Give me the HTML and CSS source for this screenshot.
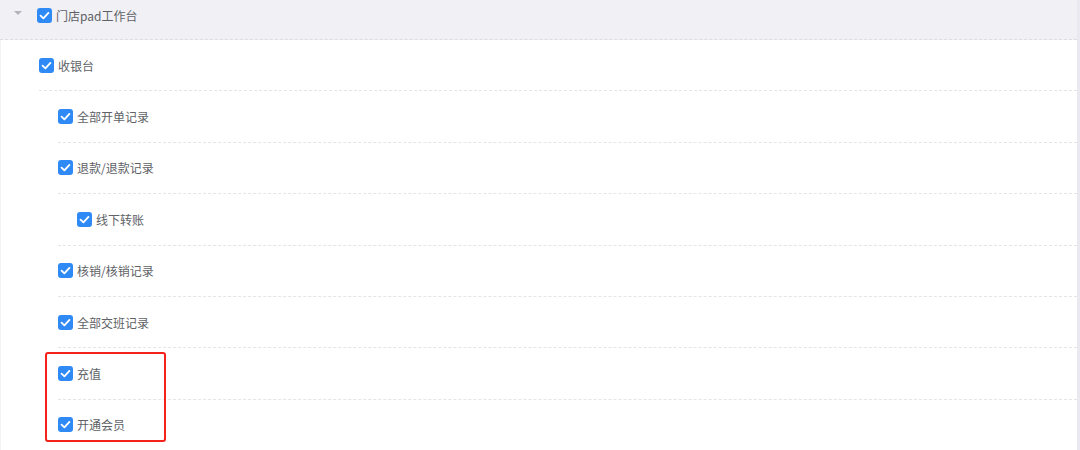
FILE: index.html
```html
<!DOCTYPE html>
<html lang="zh">
<head>
<meta charset="utf-8">
<link rel="stylesheet" href="styles.css">
</head>
<body>
<div class="page">
  <div class="tree">
    <div class="head">
      <span class="caret"></span>
      <span class="cb"><svg viewBox="0 0 16 16"><path d="M3.8 8.2 L6.8 11 L12.2 5.2" /></svg></span>
      <span class="label head-label">门店pad工作台</span>
    </div>
    <div class="row lvl1"><span class="cb"><svg viewBox="0 0 16 16"><path d="M3.8 8.2 L6.8 11 L12.2 5.2" /></svg></span><span class="label">收银台</span></div>
    <div class="row lvl2"><span class="cb"><svg viewBox="0 0 16 16"><path d="M3.8 8.2 L6.8 11 L12.2 5.2" /></svg></span><span class="label">全部开单记录</span></div>
    <div class="row lvl2"><span class="cb"><svg viewBox="0 0 16 16"><path d="M3.8 8.2 L6.8 11 L12.2 5.2" /></svg></span><span class="label">退款/退款记录</span></div>
    <div class="row lvl2 sub"><span class="cb"><svg viewBox="0 0 16 16"><path d="M3.8 8.2 L6.8 11 L12.2 5.2" /></svg></span><span class="label">线下转账</span></div>
    <div class="row lvl2"><span class="cb"><svg viewBox="0 0 16 16"><path d="M3.8 8.2 L6.8 11 L12.2 5.2" /></svg></span><span class="label">核销/核销记录</span></div>
    <div class="row lvl2"><span class="cb"><svg viewBox="0 0 16 16"><path d="M3.8 8.2 L6.8 11 L12.2 5.2" /></svg></span><span class="label">全部交班记录</span></div>
    <div class="row lvl2"><span class="cb"><svg viewBox="0 0 16 16"><path d="M3.8 8.2 L6.8 11 L12.2 5.2" /></svg></span><span class="label">充值</span></div>
    <div class="row lvl2"><span class="cb"><svg viewBox="0 0 16 16"><path d="M3.8 8.2 L6.8 11 L12.2 5.2" /></svg></span><span class="label">开通会员</span></div>
    <div class="highlight"></div>
  </div>
  <div class="edge"></div>
</div>
</body>
</html>
```
FILE: styles.css
```css
html, body {
  margin: 0;
  padding: 0;
  background: #ffffff;
}
body {
  font-family: "Noto Sans CJK SC", "Noto Sans", sans-serif;
  color: #606266;
}
.page {
  display: flex;
  width: 1080px;
  height: 450px;
  overflow: hidden;
}
.tree {
  position: relative;
  flex: 1;
  border-left: 1px solid #f3f3f5;
}
.edge {
  width: 3px;
  background: #e9e9ef;
}
.head {
  height: 40px;
  box-sizing: border-box;
  background: #f0f0f5;
  border-bottom: 1px dashed #dcdce2;
  margin-left: -1px;
  display: flex;
  align-items: center;
  padding-bottom: 9px;
}
.caret {
  width: 0;
  height: 0;
  border-left: 4px solid transparent;
  border-right: 4px solid transparent;
  border-top: 4px solid #b4b4bc;
  margin-left: 14px;
  margin-right: 15px;
  margin-top: -4px;
}
.cb {
  width: 15px;
  height: 15px;
  border-radius: 3px;
  background: #2f8af5;
  display: inline-flex;
  flex: none;
}
.cb svg {
  width: 15px;
  height: 15px;
}
.cb path {
  fill: none;
  stroke: #ffffff;
  stroke-width: 2;
  stroke-linecap: round;
  stroke-linejoin: round;
}
.label {
  margin-left: 4px;
  font-size: 12px;
  line-height: 15px;
}
.head-label {
  margin-left: 4px;
}
.row {
  height: 51.4px;
  box-sizing: border-box;
  border-bottom: 1px dashed #e4e4e9;
  display: flex;
  align-items: center;
}
.lvl1 {
  margin-left: 38px;
}
.lvl2 {
  margin-left: 57px;
}
.sub {
  padding-left: 19px;
}
.highlight {
  position: absolute;
  left: 44px;
  top: 352px;
  width: 117px;
  height: 86px;
  border: 2px solid #f5221b;
  border-radius: 3px;
}
```
